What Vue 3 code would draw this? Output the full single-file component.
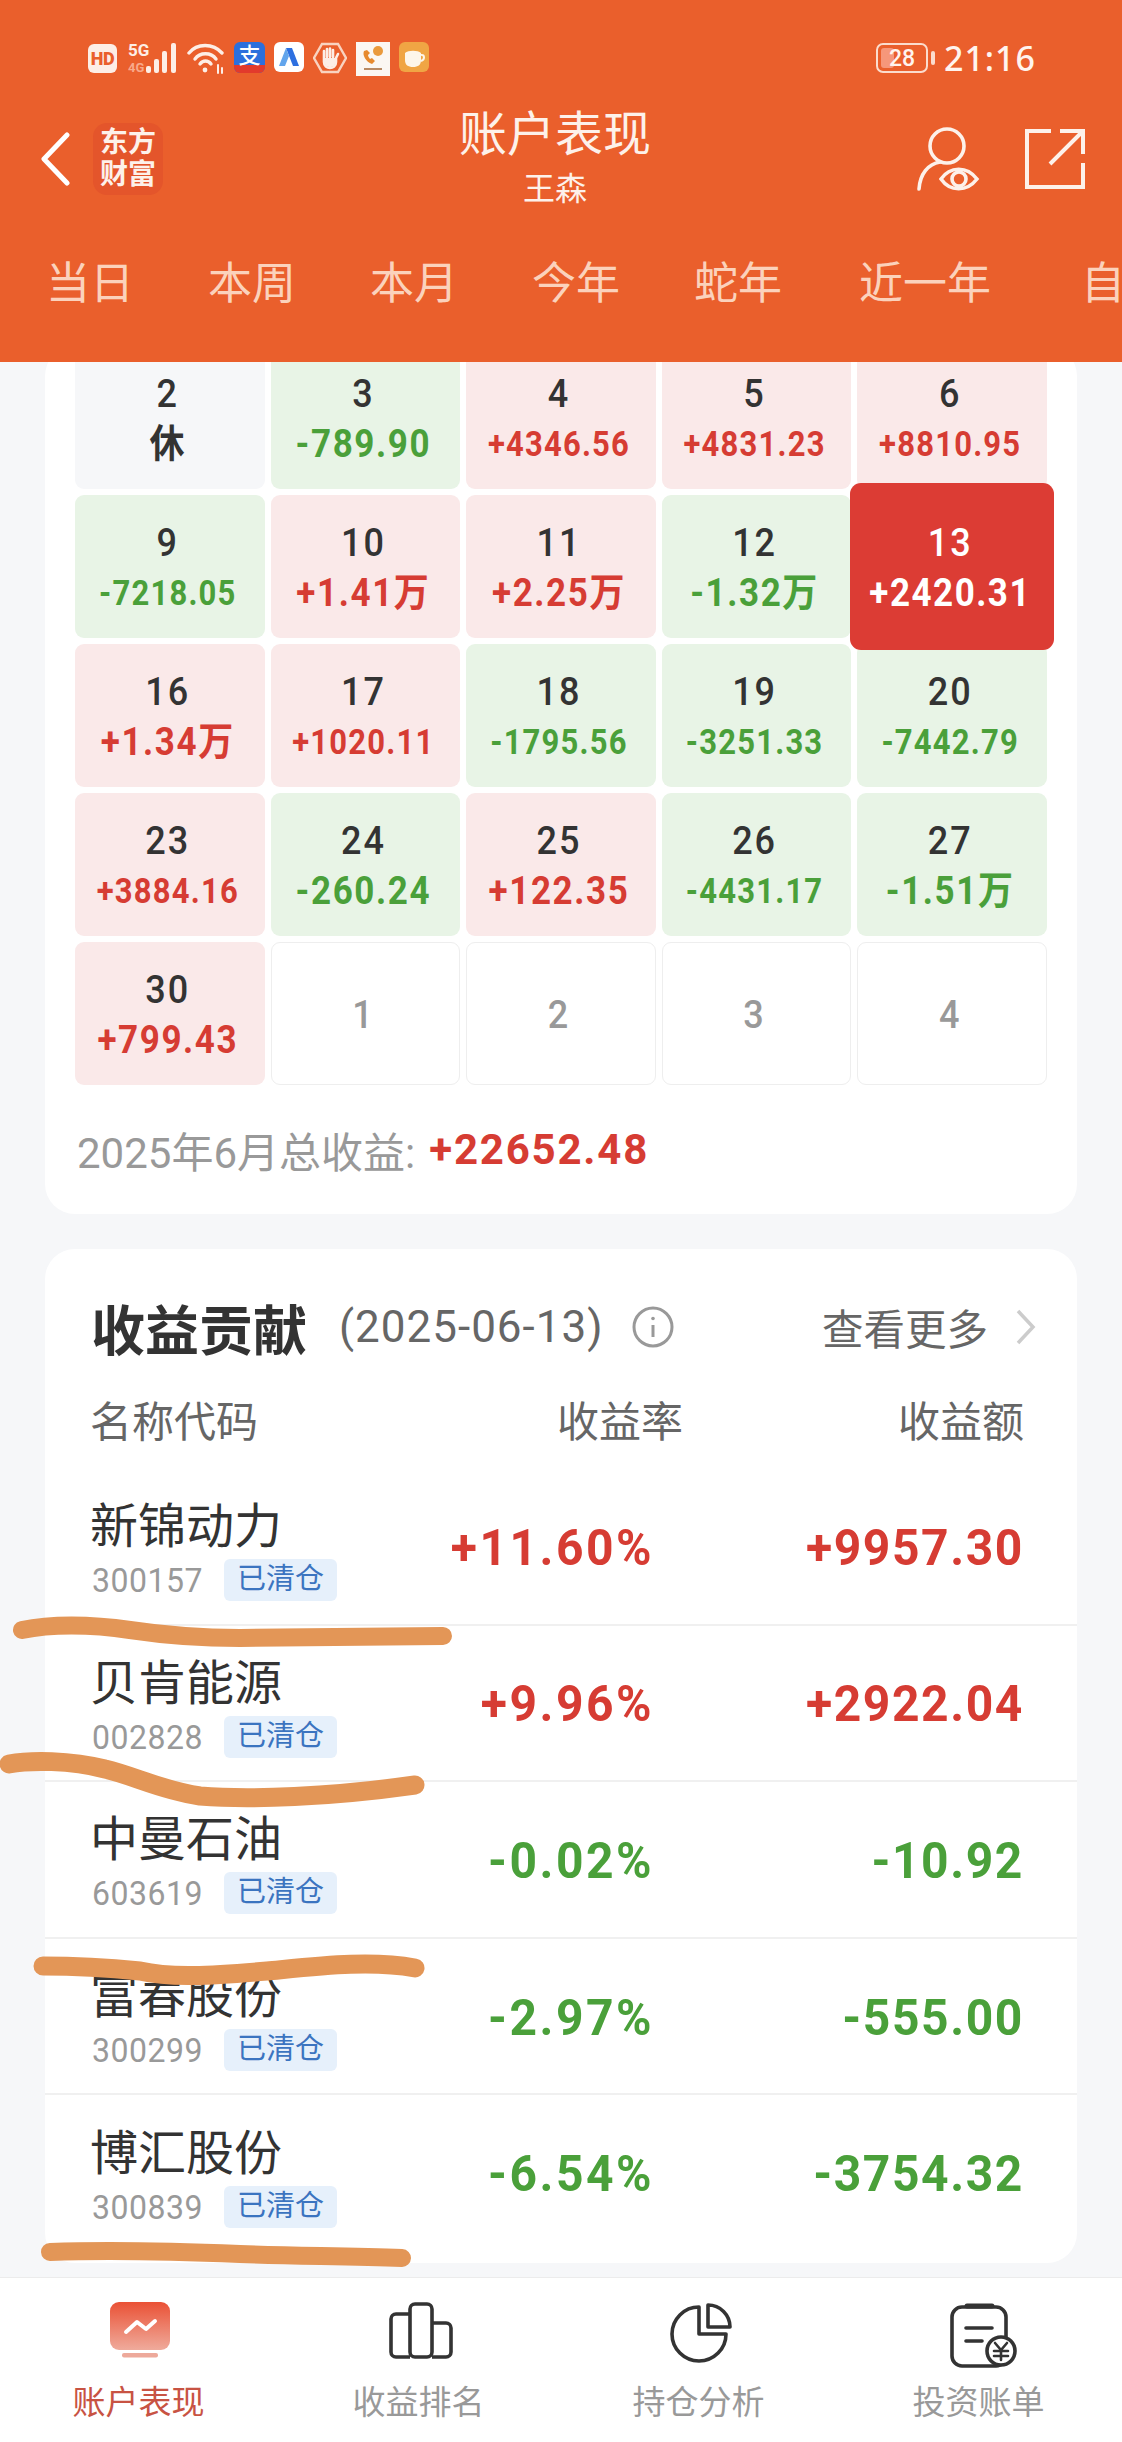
<template>
  <div class="phone">
    <header class="top">
      <div class="status">
        <div class="st-icons">
          <span class="hd">HD</span>
          <svg class="sig" width="50" height="32" viewBox="0 0 50 32">
            <text x="0" y="14" class="sig-5g">5G</text>
            <text x="0" y="30" class="sig-4g">4G</text>
            <g fill="#fdeee6">
              <rect x="18" y="24" width="5" height="7" rx="2" />
              <rect x="26" y="17" width="5" height="14" rx="2" />
              <rect x="34" y="9" width="5" height="22" rx="2" />
              <rect x="43" y="1" width="5" height="30" rx="2" />
            </g>
          </svg>
          <svg class="wifi" width="38" height="32" viewBox="0 0 38 32" fill="none" stroke="#fdeee6" stroke-width="3.4" stroke-linecap="round">
            <path d="M2 11C10 1 26 1 35 11" />
            <path d="M8 17C13 10 24 10 29 17" />
            <path d="M13 22C16 18 21 18 24 22" />
            <circle cx="18" cy="28" r="2.4" fill="#fdeee6" stroke="none" />
            <path d="M31 23v8M35 26v5" stroke-width="2" />
          </svg>
          <svg width="31" height="31" viewBox="0 0 31 31" class="app">
            <rect width="31" height="31" rx="6" fill="#2c6fdc" />
            <path d="M0 23h31v2a6 6 0 0 1-6 6H6a6 6 0 0 1-6-6z" fill="#e23a2c" />
            <text x="15.5" y="21" class="alipay">支</text>
          </svg>
          <svg width="30" height="30" viewBox="0 0 30 30" class="app">
            <rect width="30" height="30" rx="6" fill="#fff" />
            <path d="M12 6h6l7 18h-6z" fill="#2d6fe0" />
            <path d="M12 6l-7 18h6l4-10z" fill="#62a5ec" />
          </svg>
          <svg width="34" height="32" viewBox="0 0 34 32" class="app" fill="none">
            <path d="M9 2h16l8 14-8 14H9L1 16z" stroke="#f9d3c0" stroke-width="2.4" />
            <path d="M11 15V9M14 15V7M17 15V6.500M20 15V8M11 15v5c0 4 3 6 6 6s6-2 6-6v-4l2-4" stroke="#fdeee6" stroke-width="2.6" stroke-linecap="round" />
            <path d="M12 16h10v5c0 3-2 4-5 4s-5-1-5-4z" fill="#fdeee6" />
          </svg>
          <svg width="34" height="34" viewBox="0 0 34 34" class="app">
            <rect width="34" height="34" fill="#fbf7f2" />
            <path d="M8 9c-2 4 2 11 8 13l3-3-3-3-2 1c-1-1-2-3-2-4l2-2-3-3z" fill="#e78a2e" />
            <circle cx="22" cy="9" r="5" fill="#ea9a3c" />
            <rect x="8" y="26" width="18" height="2" fill="#b98a63" />
          </svg>
          <svg width="30" height="30" viewBox="0 0 30 30" class="app">
            <rect width="30" height="30" rx="6" fill="#f0a544" />
            <path d="M6 11c3-3 13-3 16 0v7c0 5-3 7-8 7s-8-2-8-7z" fill="#fdf6ea" />
            <path d="M22 13c4-1 4 5 0 6" fill="none" stroke="#fdf6ea" stroke-width="2" />
          </svg>
        </div>
        <div class="st-right">
          <div class="battery"><i class="bat-fill"></i><span>28</span></div>
          <i class="bat-nub"></i>
          <span class="clock">21:16</span>
        </div>
      </div>

      <div class="nav">
        <div class="nav-left">
          <svg width="32" height="54" viewBox="0 0 32 54" fill="none" stroke="#fff" stroke-width="5" stroke-linecap="round" stroke-linejoin="round">
            <path d="M28 3L5 27l23 24" />
          </svg>
          <div class="logo">东方<br />财富</div>
        </div>
        <div class="title">
          <div class="title-main">账户表现</div>
          <div class="title-sub">王森</div>
        </div>
        <div class="nav-right">
          <svg width="68" height="66" viewBox="0 0 68 66" fill="none" stroke="#fdf1ea" stroke-width="3.600" stroke-linecap="round">
            <circle cx="31" cy="20" r="17" />
            <path d="M24 36C12 38 4 48 3 63" />
            <path d="M25 53c9-13 26-13 36 0-10 13-27 13-36 0z" />
            <circle cx="43" cy="53" r="7" />
          </svg>
          <svg width="62" height="62" viewBox="0 0 62 62" fill="none" stroke="#fdf1ea" stroke-width="4">
            <path d="M27 3H3v56h56V35" />
            <path d="M36 3h23v23M59 3L26 36" />
          </svg>
        </div>
      </div>

      <div class="tabs">
        <span v-for="t in tabs" :key="t" class="tab">{{ t }}</span>
      </div>
    </header>

    <main class="scroll">
      <div class="inner">
        <section class="card cal-card">
          <div class="cal">
            <div
              v-for="(c, i) in days"
              :key="i"
              class="cell"
              :class="[c.kind, { long: c.v && c.v.length > 7 }]"
            >
              <span class="day">{{ c.d }}</span>
              <span v-if="c.v" class="val">{{ c.v }}</span>
            </div>
          </div>
          <div class="total"><span>2025年6月总收益:</span><b>+22652.48</b></div>
        </section>

        <section class="card list-card">
          <div class="head">
            <h2>收益贡献</h2>
            <span class="date">(2025-06-13)</span>
            <svg class="info" width="42" height="42" viewBox="0 0 42 42" fill="none" stroke="#999" stroke-width="3">
              <circle cx="21" cy="21" r="19" />
              <path d="M21 19v12" />
              <circle cx="21" cy="12.500" r="1.800" fill="#999" stroke="none" />
            </svg>
            <span class="more">查看更多</span>
            <svg width="20" height="36" viewBox="0 0 20 36" fill="none" stroke="#ccc" stroke-width="3.500">
              <path d="M2 2l15 16L2 34" />
            </svg>
          </div>
          <div class="thead">
            <span>名称代码</span>
            <span class="th-r">收益率</span>
            <span class="th-r">收益额</span>
          </div>
          <div v-for="s in stocks" :key="s.code" class="row">
            <div class="who">
              <div class="name">{{ s.name }}</div>
              <div class="sub">
                <span class="code">{{ s.code }}</span>
                <span class="tag">已清仓</span>
              </div>
            </div>
            <span class="num rate" :class="s.kind">{{ s.rate }}</span>
            <span class="num" :class="s.kind">{{ s.amt }}</span>
          </div>
        </section>
      </div>
    </main>

    <nav class="bottom">
      <div class="bt active">
        <div class="bt-ic">
          <svg width="60" height="56" viewBox="0 0 60 56">
            <defs>
              <linearGradient id="tvg" x1="0" y1="0" x2="0" y2="1">
                <stop offset="0" stop-color="#ea5135" />
                <stop offset="1" stop-color="#efab9c" />
              </linearGradient>
            </defs>
            <rect width="60" height="48" rx="9" fill="url(#tvg)" />
            <rect x="12" y="51" width="36" height="4.500" rx="2" fill="#eda99b" />
            <path d="M16 30l11-10 9 7 9-8" fill="none" stroke="#fff" stroke-width="4" stroke-linecap="round" stroke-linejoin="round" />
          </svg>
        </div>
        <span class="bt-label">账户表现</span>
      </div>
      <div class="bt">
        <div class="bt-ic nudge">
          <svg width="66" height="58" viewBox="0 0 66 58" fill="none" stroke="#333" stroke-width="3.600" stroke-linejoin="round">
            <path d="M22 12H8a5 5 0 0 0-5 5v33a5 5 0 0 0 5 5h14" />
            <rect x="22" y="2" width="22" height="53" rx="5" />
            <path d="M44 21h14a5 5 0 0 1 5 5v24a5 5 0 0 1-5 5H44" />
          </svg>
        </div>
        <span class="bt-label">收益排名</span>
      </div>
      <div class="bt">
        <div class="bt-ic nudge">
          <svg width="62" height="62" viewBox="0 0 62 62" fill="none" stroke="#333" stroke-width="3.600" stroke-linejoin="round">
            <path d="M29 5A27 27 0 1 0 56 32H29z" />
            <path d="M38 3A22 22 0 0 1 60 25H38z" />
          </svg>
        </div>
        <span class="bt-label">持仓分析</span>
      </div>
      <div class="bt">
        <div class="bt-ic bill">
          <svg width="70" height="66" viewBox="0 0 70 66" fill="none" stroke="#333" stroke-width="3.600" stroke-linecap="round">
            <rect x="3" y="5" width="54" height="59" rx="10" />
            <path d="M18 4h25" stroke-width="5" />
            <path d="M17 26h26M17 39h16" />
            <circle cx="52" cy="49" r="14" fill="#fff" />
            <path d="M46 41l6 7 6-7M45 49h14M45 54h14M52 48v10" stroke-width="2.600" />
          </svg>
        </div>
        <span class="bt-label">投资账单</span>
      </div>
    </nav>

    <!-- marker strokes drawn over the screenshot -->
    <svg class="scribble" width="1122" height="2442" viewBox="0 0 1122 2442" fill="none" stroke="#e39657" stroke-linecap="round" stroke-linejoin="round">
      <path stroke-width="18" d="M22 1630C50 1624 90 1624 130 1630C170 1636 200 1638 240 1638L443 1636" />
      <path stroke-width="19" d="M9 1764C30 1760 70 1760 105 1769C135 1776 160 1790 200 1796C250 1800 330 1797 415 1785" />
      <path stroke-width="19" d="M43 1966C80 1966 110 1968 140 1971C170 1978 210 1976 267 1971C320 1966 370 1960 415 1968" />
      <path stroke-width="18" d="M50 2252C110 2250 190 2252 240 2254C300 2256 350 2256 402 2258" />
    </svg>
  </div>
</template>

<script setup>
const tabs = ['当日', '本周', '本月', '今年', '蛇年', '近一年', '自']

const cell = (d, v, today) => {
  let kind = 'rest'
  if (v) kind = v[0] === '+' ? 'up' : 'down'
  if (today) kind = 'today'
  return { d, v, kind }
}

const days = [
  { d: 2, v: '休', kind: 'rest' },
  cell(3, '-789.90'),
  cell(4, '+4346.56'),
  cell(5, '+4831.23'),
  cell(6, '+8810.95'),
  cell(9, '-7218.05'),
  cell(10, '+1.41万'),
  cell(11, '+2.25万'),
  cell(12, '-1.32万'),
  cell(13, '+2420.31', true),
  cell(16, '+1.34万'),
  cell(17, '+1020.11'),
  cell(18, '-1795.56'),
  cell(19, '-3251.33'),
  cell(20, '-7442.79'),
  cell(23, '+3884.16'),
  cell(24, '-260.24'),
  cell(25, '+122.35'),
  cell(26, '-4431.17'),
  cell(27, '-1.51万'),
  cell(30, '+799.43'),
  { d: 1, kind: 'empty' },
  { d: 2, kind: 'empty' },
  { d: 3, kind: 'empty' },
  { d: 4, kind: 'empty' }
]

const stocks = [
  { name: '新锦动力', code: '300157', rate: '+11.60%', amt: '+9957.30', kind: 'up' },
  { name: '贝肯能源', code: '002828', rate: '+9.96%', amt: '+2922.04', kind: 'up' },
  { name: '中曼石油', code: '603619', rate: '-0.02%', amt: '-10.92', kind: 'down' },
  { name: '富春股份', code: '300299', rate: '-2.97%', amt: '-555.00', kind: 'down' },
  { name: '博汇股份', code: '300839', rate: '-6.54%', amt: '-3754.32', kind: 'down' }
]
</script>

<style>
html,
body {
  margin: 0;
  background: #f6f7f9;
}
</style>

<style scoped>
.phone {
  position: relative;
  width: 1122px;
  height: 2442px;
  display: flex;
  flex-direction: column;
  overflow: hidden;
  background: #f6f7f9;
  font-family: Roboto, "Noto Sans CJK SC", sans-serif;
  color: #333;
}

.top {
  flex: none;
  height: 362px;
  background: #ea5f2c;
  color: #fff;
}

.status {
  height: 116px;
  padding: 42px 86px 0 88px;
  box-sizing: border-box;
  display: flex;
  justify-content: space-between;
}

.st-icons {
  display: flex;
  align-items: flex-start;
}

.hd {
  width: 29px;
  height: 29px;
  margin-top: 2px;
  border-radius: 6px;
  background: #fdeee6;
  color: #ea5f2c;
  font-size: 18px;
  font-weight: 900;
  line-height: 29px;
  text-align: center;
  letter-spacing: -0.5px;
}

.sig {
  margin-left: 11px;
}

.sig-5g {
  font-size: 17px;
  font-weight: 700;
  fill: #fdeee6;
}

.sig-4g {
  font-size: 13px;
  font-weight: 700;
  fill: #f8a98a;
}

.wifi {
  margin-left: 9px;
}

.app {
  margin-left: 9px;
  flex: none;
}

.alipay {
  font-size: 22px;
  font-weight: 500;
  fill: #fff;
  text-anchor: middle;
}

.st-right {
  display: flex;
  align-items: center;
  height: 32px;
}

.battery {
  position: relative;
  width: 52px;
  height: 30px;
  box-sizing: border-box;
  border: 2px solid #fbdccd;
  border-radius: 7px;
  font-size: 23px;
  font-weight: 500;
  line-height: 27px;
  text-align: center;
  color: #fff4ee;
}

.battery span {
  position: relative;
}

.bat-fill {
  position: absolute;
  left: 3px;
  top: 3px;
  bottom: 3px;
  width: 13px;
  border-radius: 3px;
  background: #f6977a;
}

.bat-nub {
  width: 4px;
  height: 14px;
  margin-left: 3px;
  border-radius: 2px;
  background: #fbdccd;
}

.clock {
  margin-left: 9px;
  font-size: 34px;
  font-weight: 500;
  letter-spacing: 1px;
  color: #fff4ee;
  font-family: "Noto Sans", sans-serif;
}

.nav {
  height: 114px;
  margin-top: -14px;
  padding: 0 36px 0 24px;
  display: grid;
  grid-template-columns: 1fr auto 1fr;
  align-items: center;
}

.nav-left {
  display: flex;
  align-items: center;
  margin-left: 15px;
  gap: 22px;
}

.logo {
  width: 70px;
  height: 72px;
  border-radius: 14px;
  background: #e4552b;
  color: #fdf1ea;
  font-size: 28px;
  font-weight: 700;
  line-height: 32px;
  text-align: center;
  padding-top: 4px;
  box-sizing: border-box;
}

.title {
  text-align: center;
}

.title-main {
  font-size: 48px;
  line-height: 54px;
  color: #fdf1ea;
}

.title-sub {
  font-size: 32px;
  line-height: 42px;
  margin-top: 6px;
  color: #fdf1ea;
}

.nav-right {
  display: flex;
  justify-content: flex-end;
  align-items: center;
  gap: 40px;
}

.tabs {
  margin-top: 38px;
  padding-left: 46px;
  display: flex;
  gap: 74px;
  white-space: nowrap;
}

.tab {
  font-size: 44px;
  line-height: 60px;
  color: #fbd2bc;
}

.tab:nth-child(6) {
  margin-left: 3px;
}

.tab:last-child {
  margin-left: 16px;
}

.scroll {
  flex: 1;
  min-height: 0;
  overflow: hidden;
}

.inner {
  margin-top: -16px;
  padding: 0 45px;
}

.card {
  background: #fff;
  border-radius: 30px;
}

.cal-card {
  padding: 0 30px;
}

.cal {
  display: grid;
  grid-template-columns: repeat(5, 1fr);
  grid-auto-rows: 143px;
  gap: 6px;
}

.cell {
  display: flex;
  flex-direction: column;
  align-items: center;
  justify-content: center;
  border-radius: 9px;
  padding: 3px 4px 0 0;
  box-sizing: border-box;
}

.day {
  font-size: 36px;
  font-weight: 500;
  line-height: 47px;
  letter-spacing: 2px;
  color: #333;
  display: inline-block;
  transform: scaleY(1.1);
}

.val {
  margin-top: 3px;
  font-size: 35px;
  font-weight: 700;
  line-height: 47px;
  letter-spacing: 1.600px;
  white-space: nowrap;
  display: inline-block;
  transform: scaleY(1.12);
}

.long .val {
  font-size: 31px;
  letter-spacing: 1.200px;
}

.rest {
  background: #f6f7f9;
}

.rest .val {
  color: #333;
}

.up {
  background: #fae9e9;
  color: #d63c33;
}

.down {
  background: #e8f4e6;
  color: #4aa03a;
}

.today {
  margin: -12px -7px;
  border-radius: 11px;
  background: #dc3c34;
  position: relative;
  z-index: 1;
}

.today .day,
.today .val {
  color: #fff;
}

.today .val {
  font-size: 35px;
  letter-spacing: 1.500px;
}

.empty {
  background: #fff;
  border: 1px solid #eeeeee;
}

.empty .day {
  color: #999;
}

.total {
  height: 129px;
  display: flex;
  align-items: center;
  font-size: 42px;
  color: #999;
  white-space: nowrap;
  padding-left: 2px;
}

.total b {
  margin-left: 14px;
  font-weight: 700;
  color: #d63c33;
  letter-spacing: 1.800px;
}

.list-card {
  margin-top: 35px;
  padding-bottom: 13px;
}

.head {
  display: flex;
  align-items: center;
  height: 60px;
  padding: 48px 41px 0 46px;
}

.head h2 {
  margin: 0;
  font-size: 54px;
  font-weight: 700;
  color: #333;
}

.date {
  margin-left: 32px;
  font-size: 44px;
  letter-spacing: 1px;
  color: #666;
}

.info {
  margin-left: 28px;
}

.more {
  margin-left: auto;
  margin-right: 28px;
  font-size: 41.500px;
  color: #666;
}

.thead {
  display: grid;
  grid-template-columns: 1fr auto 341px;
  padding: 36px 53px 14px 45px;
  font-size: 42px;
  line-height: 60px;
  color: #666;
}

.th-r {
  text-align: right;
}

.row {
  height: 156.600px;
  box-sizing: border-box;
  display: grid;
  grid-template-columns: 1fr auto 370px;
  align-items: center;
  padding: 0 53px 0 45px;
  border-top: 2px solid #f0f0f0;
}

.row:nth-child(3) {
  border-top-color: transparent;
}

.who {
  margin-top: 9px;
}

.name {
  font-size: 48px;
  line-height: 54px;
  color: #333;
}

.sub {
  display: flex;
  align-items: center;
  margin-top: 5px;
  gap: 21px;
  padding-left: 2px;
}

.code {
  font-size: 32px;
  letter-spacing: 0.500px;
  color: #999;
  display: inline-block;
  transform: scaleY(1.06);
}

.tag {
  width: 113px;
  height: 42px;
  border-radius: 6px;
  background: #e6f0fb;
  color: #3b74c0;
  font-size: 29px;
  line-height: 40px;
  text-align: center;
}

.num {
  margin-top: 2px;
  font-size: 48px;
  font-weight: 700;
  letter-spacing: 1.600px;
  text-align: right;
  background: none;
  transform: scaleY(1.06);
}

.num.rate {
  letter-spacing: 2.500px;
}

.num.up {
  color: #d63c33;
}

.num.down {
  color: #4aa03a;
}

.bottom {
  flex: none;
  height: 165px;
  box-sizing: border-box;
  border-top: 1px solid #ececec;
  background: #fff;
  padding-right: 2px;
  display: grid;
  grid-template-columns: repeat(4, 1fr);
}

.bt {
  display: flex;
  flex-direction: column;
  align-items: center;
  font-size: 33px;
  line-height: 44px;
  color: #999;
}

.bt-label {
  margin-right: 3px;
}

.bt.active {
  color: #c85343;
}

.bt-ic {
  height: 79px;
  padding-top: 24px;
  box-sizing: content-box;
  display: flex;
  align-items: flex-start;
  justify-content: center;
}

.nudge {
  margin-left: 2px;
}

.bill {
  margin-left: 7px;
}

.scribble {
  position: absolute;
  left: 0;
  top: 0;
  pointer-events: none;
}
</style>
